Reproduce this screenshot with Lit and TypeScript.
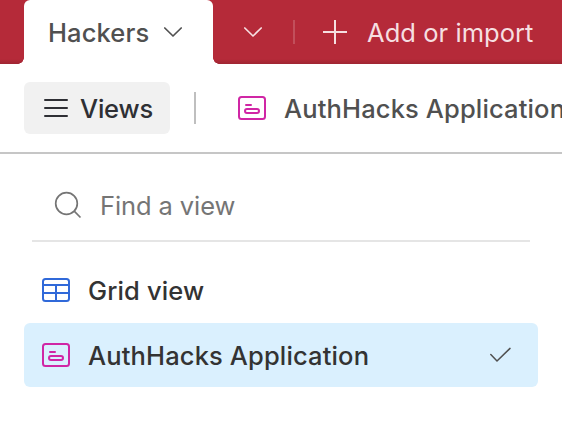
import { LitElement, html, css, svg } from "lit";
import { customElement } from "lit/decorators.js";

const chevron = svg`<path d="M.8 1 9 9 17.200 1" fill="none" stroke="currentColor" stroke-width="1.700" stroke-linecap="round" stroke-linejoin="round"/>`;

const formIcon = html`<svg width="28" height="24" viewBox="0 0 28 24" fill="none" stroke="#d026a5" stroke-width="2">
  <rect x="1" y="1" width="26" height="22" rx="2.500"/>
  <path d="M8 9h5" stroke-linecap="round"/>
  <rect x="7" y="13" width="14" height="4" rx="2"/>
</svg>`;

const gridIcon = html`<svg width="28" height="24" viewBox="0 0 28 24" fill="none" stroke="#3069d9" stroke-width="2">
  <rect x="1" y="1" width="26" height="22" rx="2.500"/>
  <path d="M1 7h26M1 15h26M14 7v16"/>
</svg>`;

@customElement("app-root")
export class AppRoot extends LitElement {
  static styles = css`
    :host {
      display: block;
      height: 440px;
      overflow: hidden;
      background: #fff;
      font: 550 25.5px/32px Inter, "Liberation Sans", sans-serif;
      color: #333;
    }
    * { box-sizing: border-box; }
    svg { display: block; flex: none; }
    span { white-space: nowrap; padding-top: 2px; }
    .tabs {
      display: flex;
      height: 64px;
      background: linear-gradient(#b52a39 0 59px, #9f2532 64px);
    }
    .tab {
      position: relative;
      display: flex;
      align-items: center;
      flex: none;
      width: 189px;
      height: 64px;
      margin-left: 24px;
      padding-left: 24px;
      border-radius: 6px 6px 0 0;
      background: #fff;
      color: #505050;
    }
    .tab::before, .tab::after {
      content: "";
      position: absolute;
      bottom: 0;
      width: 6px;
      height: 6px;
    }
    .tab::before { right: 100%; background: radial-gradient(circle at 0 0, transparent 5.5px, #fff 6px); }
    .tab::after { left: 100%; background: radial-gradient(circle at 100% 0, transparent 5.5px, #fff 6px); }
    .tab span { width: 116px; letter-spacing: 0.12px; }
    .actions { display: flex; align-items: center; color: #f6dfe1; }
    .more { margin-left: 31px; }
    .rule { width: 2px; height: 24px; margin-left: 31px; background: #c24f5b; }
    .plus { margin-left: 28px; }
    .add { margin-left: 20px; font-weight: 440; letter-spacing: 0.05px; }
    .toolbar {
      display: flex;
      align-items: center;
      height: 90px;
      padding: 0 0 1px 24px;
      border-bottom: 2px solid #c6c6c6;
      color: #505050;
    }
    .views {
      display: flex;
      align-items: center;
      flex: none;
      width: 146px;
      height: 52px;
      padding-left: 20px;
      border-radius: 6px;
      background: #f1f1f1;
      color: #2e2f34;
    }
    .views span { margin-left: 12px; letter-spacing: -0.2px; }
    .divider { flex: none; width: 2px; height: 32px; margin: 0 42px 0 24px; background: #bfbfbf; }
    .toolbar > span { flex: none; margin-left: 18px; letter-spacing: 0.14px; }
    .search {
      display: flex;
      align-items: center;
      width: 498px;
      height: 72px;
      margin: 16px 0 0 32px;
      padding-left: 22px;
      border-bottom: 2px solid #e5e5e5;
      color: #757575;
      font-weight: 430;
    }
    .search span { margin-left: 18px; letter-spacing: -0.1px; }
    .list { padding: 16px 24px 0; }
    .row {
      display: flex;
      align-items: center;
      height: 64px;
      margin-bottom: 1px;
      padding: 0 27px 0 18px;
      border-radius: 6px;
    }
    .row.on { background: #daf0fe; }
    .row span { flex: 1; margin-left: 18px; letter-spacing: 0.14px; }
  `;

  render() {
    return html`
      <div class="tabs">
        <div class="tab">
          <span>Hackers</span>
          <svg width="18" height="10" viewBox="0 0 18 10">${chevron}</svg>
        </div>
        <div class="actions">
          <svg class="more" width="18" height="10" viewBox="0 0 18 10">${chevron}</svg>
          <div class="rule"></div>
          <svg class="plus" width="24" height="24" viewBox="0 0 24 24" stroke="currentColor" stroke-width="2"><path d="M0 12h24M12 0v24"/></svg>
          <span class="add">Add or import</span>
        </div>
      </div>
      <div class="toolbar">
        <div class="views">
          <svg width="24" height="20" viewBox="0 0 24 20" stroke="currentColor" stroke-width="2" stroke-linecap="round"><path d="M1 2h22M1 10h22M1 18h22"/></svg>
          <span>Views</span>
        </div>
        <div class="divider"></div>
        ${formIcon}
        <span>AuthHacks Application</span>
      </div>
      <div class="search">
        <svg width="28" height="28" viewBox="0 0 28 28" fill="none" stroke="currentColor" stroke-width="1.700"><circle cx="12.500" cy="12.500" r="10.800"/><path d="m20.200 20.200 6.300 6.300"/></svg>
        <span>Find a view</span>
      </div>
      <div class="list">
        <div class="row">${gridIcon}<span>Grid view</span></div>
        <div class="row on">
          ${formIcon}<span>AuthHacks Application</span>
          <svg width="22" height="16" viewBox="0 0 22 16" fill="none" stroke="#505050" stroke-width="1.500" stroke-linecap="round" stroke-linejoin="round"><path d="m1.800 7.500 6.200 6.500L21 1.400"/></svg>
        </div>
      </div>
    `;
  }
}
